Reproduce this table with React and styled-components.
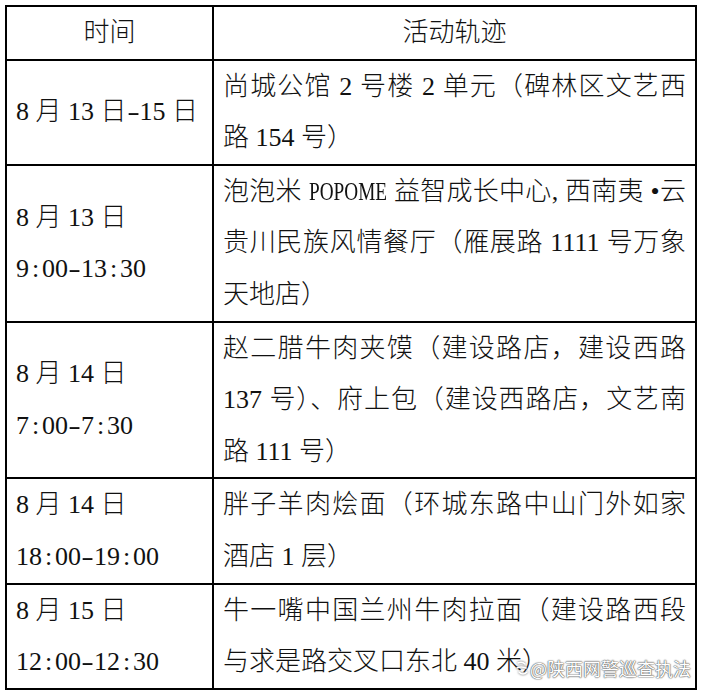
import React from "react";
import styled, { createGlobalStyle } from "styled-components";

const GlobalStyle = createGlobalStyle`
  html, body {
    margin: 0;
    padding: 0;
    background: #fff;
  }
`;

const Page = styled.div`
  position: relative;
  width: 703px;
  height: 693px;
  padding: 5px 0 0 5px;
  box-sizing: border-box;
  overflow: hidden;
  background: #fff;
`;

const Table = styled.table`
  width: 692px;
  border-collapse: collapse;
  table-layout: fixed;
  font-family: "Liberation Serif", "Noto Sans CJK SC", serif;
  font-weight: 300;
  font-size: 26px;
  line-height: 51.6px;
  color: #111;
`;

const HeadCell = styled.th`
  border: 2px solid #000;
  padding: 0;
  font-weight: 300;
  text-align: center;
  width: ${(p) => (p.$w ? `${p.$w}px` : "auto")};
`;

const TimeCell = styled.td`
  border: 2px solid #000;
  padding: 0 0 0 9px;
  vertical-align: middle;
  white-space: nowrap;
`;

const TrackCell = styled.td`
  border: 2px solid #000;
  padding: 0 9px 0 9px;
  vertical-align: top;
`;

const Line = styled.div`
  white-space: nowrap;
  text-align: ${(p) => (p.$last ? "left" : "justify")};
  text-align-last: ${(p) => (p.$last ? "left" : "justify")};
`;

const Narrow = styled.span`
  display: inline-block;
  transform: scaleX(0.74);
  transform-origin: left center;
  margin-right: -27px;
`;

// half-width slot for ":" and "-" so times keep the even pitch of the source
const Sep = styled.span`
  display: inline-block;
  width: 13px;
  text-align: center;
  transform: ${(p) => (p.$dash ? "scaleX(1.45)" : "none")};
`;

const Watermark = styled.div`
  position: absolute;
  right: 12px;
  bottom: 14px;
  display: flex;
  align-items: center;
  gap: 1px;
  font-family: "Noto Sans CJK SC", sans-serif;
  font-size: 18px;
  line-height: 22px;
  color: #fff;
  text-shadow: 0 0 1px #555, 0 0 1px #555, 0 0 2px #888;
`;

const Mark = styled.svg`
  width: 14px;
  height: 18px;
  filter: drop-shadow(0 0 1px #555);
`;

function TimeText({ text }) {
  return (
    <div>
      {text.split("").map((c, i) =>
        c === ":" || c === "-" ? (
          <Sep key={i} $dash={c === "-"}>
            {c}
          </Sep>
        ) : (
          c
        )
      )}
    </div>
  );
}

const rows = [
  {
    time: ["8 月 13 日-15 日"],
    track: [
      "尚城公馆 2 号楼 2 单元（碑林区文艺西",
      "路 154 号）",
    ],
  },
  {
    time: ["8 月 13 日", "9:00-13:30"],
    track: [
      <>
        泡泡米 <Narrow>POPOME</Narrow> 益智成长中心, 西南夷 •云
      </>,
      "贵川民族风情餐厅（雁展路 1111 号万象",
      "天地店）",
    ],
  },
  {
    time: ["8 月 14 日", "7:00-7:30"],
    track: [
      "赵二腊牛肉夹馍（建设路店，建设西路",
      "137 号）、府上包（建设西路店，文艺南",
      "路 111 号）",
    ],
  },
  {
    time: ["8 月 14 日", "18:00-19:00"],
    track: ["胖子羊肉烩面（环城东路中山门外如家", "酒店 1 层）"],
  },
  {
    time: ["8 月 15 日", "12:00-12:30"],
    track: ["牛一嘴中国兰州牛肉拉面（建设路西段", "与求是路交叉口东北 40 米）"],
  },
];

export default function App() {
  return (
    <>
      <GlobalStyle />
      <Page>
        <Table>
          <thead>
            <tr>
              <HeadCell $w={205}>时间</HeadCell>
              <HeadCell>活动轨迹</HeadCell>
            </tr>
          </thead>
          <tbody>
            {rows.map((row, i) => (
              <tr key={i}>
                <TimeCell>
                  {row.time.map((t, j) => (
                    <TimeText key={j} text={t} />
                  ))}
                </TimeCell>
                <TrackCell>
                  {row.track.map((t, j) => (
                    <Line key={j} $last={j === row.track.length - 1}>
                      {t}
                    </Line>
                  ))}
                </TrackCell>
              </tr>
            ))}
          </tbody>
        </Table>
        <Watermark>
          <Mark viewBox="0 0 14 18">
            <path
              d="M3 4 Q7 2 10 5 M2 9 Q6 7 11 9 M4 13 Q8 17 12 13"
              fill="none"
              stroke="#fff"
              strokeWidth="1.6"
              strokeLinecap="round"
            />
          </Mark>
          <span>@陕西网警巡查执法</span>
        </Watermark>
      </Page>
    </>
  );
}
